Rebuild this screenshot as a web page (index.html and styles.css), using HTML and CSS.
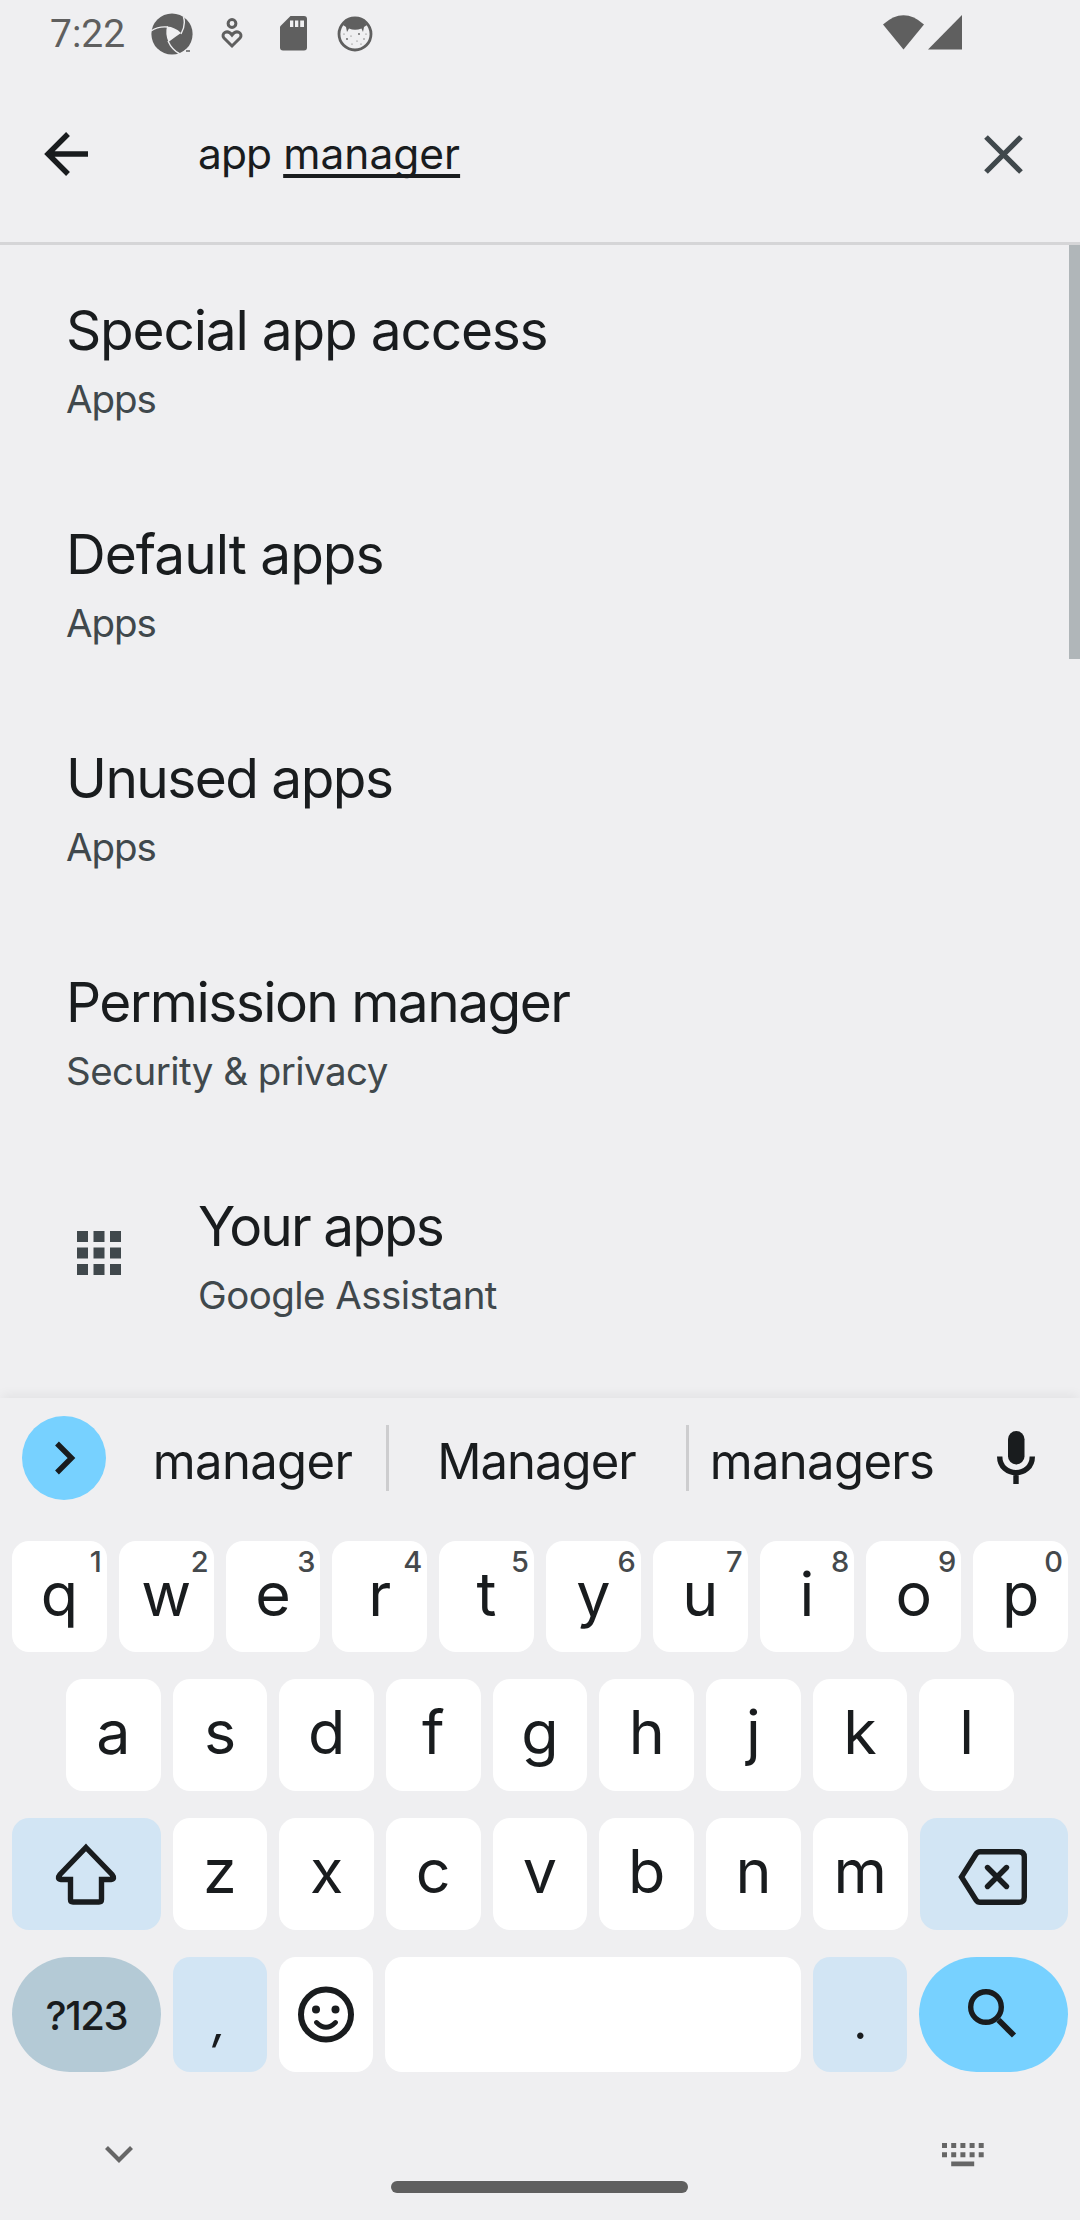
FILE: index.html
```html
<!DOCTYPE html>
<html lang="en">
<head>
<meta charset="utf-8">
<title>Settings search</title>
<link rel="stylesheet" href="styles.css">
</head>
<body>
<header class="status-bar">
  <span class="clock">7:22</span>
  <svg class="st-aperture" width="42" height="42" viewBox="0 0 42 42">
    <circle cx="21" cy="21" r="20.6" fill="#5f5f5f"/>
    <path d="M16 13.500 Q24 14 30 20 Q24 24 17.500 29 Q14 21 16 13.500Z" fill="#efeff1"/>
    <path d="M0 18 Q7 13 17 14 M32.500 4 Q35 12 30 21 M17 28 Q21 37 29 41" fill="none" stroke="#efeff1" stroke-width="1.400"/>
    <path d="M31 39.500 L36 36 L42 34 L42 42 L30 42Z" fill="#efeff1"/>
    <path d="M35 38h4" stroke="#5f5f5f" stroke-width="1.500"/>
  </svg>
  <svg class="st-heart" width="22" height="31" viewBox="0 0 22 31">
    <g fill="none" stroke="#5f5f5f" stroke-width="3"><circle cx="11" cy="5.500" r="3.900"/><path d="M11 28 L3 20 C-0.500 16 6 10.500 11 17 C16 10.500 22.500 16 19 20Z"/></g>
  </svg>
  <svg class="st-sd" width="28" height="35" viewBox="0 0 28 35">
    <path d="M10.500 0H24q3 0 3 3V31.500q0 3-3 3H3q-3 0-3-3V10.500Z" fill="#5f5f5f"/>
    <path d="M10 4.500h3.300v6.500H10zM15 4.500h3.300v6.500H15zM20.200 4.500h3.800v6.500h-3.800z" fill="#efeff1"/>
  </svg>
  <svg class="st-face" width="36" height="36" viewBox="0 0 36 36">
    <circle cx="18" cy="18" r="16" fill="none" stroke="#5f5f5f" stroke-width="2.800"/>
    <path d="M6 9Q18-5 30 9L27 11L26 16L24.500 12.500Q18 15 12 12.500L10 16L9 11Z" fill="#5f5f5f"/>
    <g fill="#5f5f5f"><circle cx="10" cy="23" r=".9"/><circle cx="22" cy="18" r=".9"/><circle cx="15" cy="28" r=".6"/><circle cx="27" cy="23" r=".7"/><circle cx="7" cy="18" r=".6"/><circle cx="20" cy="25" r=".6"/><circle cx="29" cy="18" r=".6"/><circle cx="14" cy="20" r=".6"/><circle cx="24" cy="28" r=".6"/></g>
  </svg>
  <svg class="st-wifi" width="41" height="35" viewBox="0 0 41 35"><path d="M0 9.500Q20.500-9 41 9.500L20.500 34.500Z" fill="#5f5f5f"/></svg>
  <svg class="st-signal" width="34" height="35" viewBox="0 0 34 35"><path d="M34 0V34.500H0Z" fill="#5f5f5f"/></svg>
</header>

<div class="search-bar">
  <svg class="back" width="44" height="44" viewBox="0 0 44 44"><path d="M24 2L4 22L24 42M4 22H44" fill="none" stroke="#191c1e" stroke-width="5.400"/></svg>
  <div class="query"><span class="typed">app</span> <span class="composing">manager</span></div>
  <svg class="clear" width="39" height="39" viewBox="0 0 39 39"><path d="M2 2L37 37M37 2L2 37" fill="none" stroke="#40484c" stroke-width="5.200"/></svg>
</div>

<main class="results">
  <div class="item special"><div class="copy"><div class="title">Special app access</div><div class="sub short">Apps</div></div></div>
  <div class="item default"><div class="copy"><div class="title">Default apps</div><div class="sub short">Apps</div></div></div>
  <div class="item unused"><div class="copy"><div class="title">Unused apps</div><div class="sub short">Apps</div></div></div>
  <div class="item permission"><div class="copy"><div class="title">Permission manager</div><div class="sub">Security &amp; privacy</div></div></div>
  <div class="item yours">
    <div class="icon"><svg width="45" height="44" viewBox="0 0 45 44"><path d="M0 0h11v11H0zM16.500 0h11v11h-11zM33 0h11v11H33zM0 16.500h11v11H0zM16.500 16.500h11v11h-11zM33 16.500h11v11H33zM0 33h11v11H0zM16.500 33h11v11h-11zM33 33h11v11H33z" fill="#40484c"/></svg></div>
    <div class="copy"><div class="title">Your apps</div><div class="sub">Google Assistant</div></div>
  </div>
  <div class="scrollbar"></div>
</main>

<section class="keyboard">
  <div class="suggestions">
    <div class="expand"><svg width="84" height="84" viewBox="0 0 84 84"><path d="M35 27.500L49.500 42L35 56.500" fill="none" stroke="#191c1e" stroke-width="5.400"/></svg></div>
    <div class="word word-a">manager</div>
    <div class="rule"></div>
    <div class="word word-b">Manager</div>
    <div class="rule"></div>
    <div class="word word-c">managers</div>
    <svg class="mic" width="38" height="53" viewBox="0 0 38 53"><rect x="11" y="0" width="16.500" height="33.500" rx="8.250" fill="#191c1e"/><path d="M2.700 25.500C2.700 47 35.300 47 35.300 25.500M19 42V53" fill="none" stroke="#191c1e" stroke-width="5.400"/></svg>
  </div>
  <div class="row">
    <div class="key">q<i>1</i></div><div class="key">w<i>2</i></div><div class="key">e<i>3</i></div><div class="key">r<i>4</i></div><div class="key">t<i>5</i></div><div class="key">y<i>6</i></div><div class="key">u<i>7</i></div><div class="key">i<i>8</i></div><div class="key">o<i>9</i></div><div class="key">p<i>0</i></div>
  </div>
  <div class="row row-home">
    <div class="key">a</div><div class="key">s</div><div class="key">d</div><div class="key">f</div><div class="key">g</div><div class="key">h</div><div class="key">j</div><div class="key">k</div><div class="key">l</div>
  </div>
  <div class="row">
    <div class="key wide tint"><svg width="62" height="62" viewBox="0 0 62 62"><path d="M31 4.500L57 31.500Q60.500 36 56 36.500H46.500V56.500Q46.500 59 44 59H18Q15.500 59 15.500 56.500V36.500H6Q1.500 36 5 31.500Z" fill="none" stroke="#191c1e" stroke-width="5.400"/></svg></div>
    <div class="key">z</div><div class="key">x</div><div class="key">c</div><div class="key">v</div><div class="key">b</div><div class="key">n</div><div class="key">m</div>
    <div class="key wide tint"><svg class="bksp" width="70" height="56" viewBox="0 0 70 56"><path d="M3.500 28L18 5Q19.500 2.700 22 2.700H61Q66.300 2.700 66.300 8V48Q66.300 53.300 61 53.300H22Q19.500 53.300 18 51Z" fill="none" stroke="#191c1e" stroke-width="5.400"/><path d="M29.500 18.500L48.500 37.500M48.500 18.500L29.500 37.500" stroke="#191c1e" stroke-width="5.400" stroke-linecap="round"/></svg></div>
  </div>
  <div class="row row-bottom">
    <div class="key wide symbols">?123</div>
    <div class="key tint punct comma">,</div>
    <div class="key"><svg class="emoji" width="56" height="57" viewBox="0 0 56 57"><circle cx="28" cy="28.500" r="25" fill="none" stroke="#191c1e" stroke-width="6"/><circle cx="18" cy="23.500" r="4" fill="#191c1e"/><circle cx="37.500" cy="23.500" r="4" fill="#191c1e"/><path d="M18.500 36.500Q28 46 37.500 36.500" fill="none" stroke="#191c1e" stroke-width="4.800" stroke-linecap="round"/></svg></div>
    <div class="key space"></div>
    <div class="key tint punct">.</div>
    <div class="key wide enter"><svg class="find" width="49" height="49" viewBox="0 0 49 49"><circle cx="18" cy="18" r="15.300" fill="none" stroke="#191c1e" stroke-width="5.400"/><path d="M30.500 31L46 46.500" stroke="#191c1e" stroke-width="5.800"/></svg></div>
  </div>
</section>

<footer class="nav">
  <svg class="hide" width="28" height="17" viewBox="0 0 28 17"><path d="M1.500 1.500L14 14L26.500 1.500" fill="none" stroke="#666" stroke-width="4.200"/></svg>
  <div class="home"></div>
  <svg class="switch" width="42" height="24" viewBox="0 0 42 24"><path d="M0 0h5v5H0zM9.200 0h5v5h-5zM18.400 0h5v5h-5zM27.600 0h5v5h-5zM36.700 0h5v5h-5zM0 9.200h5v5H0zM9.200 9.200h5v5h-5zM18.400 9.200h5v5h-5zM27.600 9.200h5v5h-5zM36.700 9.200h5v5h-5zM9.200 18.400h23v4.800h-23z" fill="#666"/></svg>
</footer>
</body>
</html>
```
FILE: styles.css
```css
* { box-sizing: border-box; }
body { margin: 0; width: 1080px; height: 2220px; overflow: hidden; background: #efeff1; color: #191c1e; font-family: Inter, "Liberation Sans", sans-serif; display: flex; flex-direction: column; }
svg { display: block; flex: none; }

.status-bar { height: 66px; display: flex; align-items: flex-start; padding-left: 50px; color: #5f5f5f; }
.clock { font-family: Roboto, sans-serif; font-size: 39px; line-height: 46px; margin-top: 11px; width: 101px; }
.st-aperture { margin-top: 13px; }
.st-heart { margin: 18px 0 0 28px; }
.st-sd { margin: 16px 0 0 37px; }
.st-face { margin: 16px 0 0 29px; }
.st-wifi { margin: 15px 0 0 auto; }
.st-signal { margin: 15px 118px 0 4px; }

.search-bar { height: 179px; border-bottom: 3px solid #d5d5d7; display: flex; align-items: center; padding: 0 57px 0 44px; }
.query { flex: 1; margin-left: 110px; font-size: 42.500px; line-height: 52px; white-space: nowrap; }
.typed { letter-spacing: -0.900px; }
.composing { text-decoration: underline; text-decoration-thickness: 4px; text-underline-offset: 5px; text-decoration-skip-ink: none; }

.results { position: relative; height: 1153px; overflow: hidden; }
.item { height: 224px; display: flex; padding: 50px 66px 0; }
.icon { width: 132px; padding: 40px 0 0 11px; }
.title { font-size: 55px; line-height: 70px; white-space: nowrap; }
.special .title { letter-spacing: -1.200px; }
.default .title { letter-spacing: -1px; }
.unused .title { letter-spacing: -1.550px; }
.permission .title { letter-spacing: -1.550px; }
.yours .title { letter-spacing: -1.900px; }
.sub { font-size: 38.500px; line-height: 50px; margin-top: 9px; color: #40484c; letter-spacing: -0.550px; white-space: nowrap; }
.sub.short { letter-spacing: -1.100px; }
.scrollbar { position: absolute; right: 0; top: 0; width: 11px; height: 414px; background: #b0b6b9; }

.keyboard { position: relative; background: #efeff1; box-shadow: 0 -6px 10px -2px rgba(0, 0, 0, .05); padding: 0 12px; }
.suggestions { height: 143px; display: flex; align-items: flex-start; padding: 18px 33px 0 10px; }
.expand { width: 84px; height: 84px; border-radius: 50%; background: #77d1ff; }
.word { font-size: 49px; line-height: 60px; margin-top: 16px; letter-spacing: -0.650px; text-align: center; white-space: nowrap; }
.word-a { width: 280px; padding-left: 13px; }
.word-b { width: 297px; letter-spacing: -1px; padding-right: 2px; }
.word-c { width: 266px; }
.rule { width: 3px; height: 66px; margin-top: 9px; background: #cdcdcf; }
.mic { margin: 15px 0 0 auto; }

.row { display: flex; gap: 12px; height: 111px; margin-bottom: 27px; }
.row + .row { height: 112px; }
.row-home { padding: 0 54px; }
.key { position: relative; flex: 1 1 0; border-radius: 17px; background: #fff; font-size: 61px; line-height: 106px; text-align: center; display: flex; justify-content: center; }
.key i { position: absolute; right: 5px; top: 3px; font-style: normal; font-size: 29px; line-height: 35px; font-weight: 500; color: #45494c; }
.wide { flex: none; width: 148.500px; }
.tint { background: #d2e5f4; }
.wide svg { margin-top: 25px; }
.wide .bksp { margin: 31px 0 0 -1px; }
.row + .row-bottom { height: 115px; margin-bottom: 0; }
.symbols { background: #b4cad6; border-radius: 58px; font-size: 40px; font-weight: 500; line-height: 118px; letter-spacing: -1.500px; }
.punct { font-size: 49px; line-height: 130px; }
.comma { font-style: italic; }
.emoji { margin-top: 29px; }
.space { flex: none; width: 416px; }
.enter { background: #77d1ff; border-radius: 58px; }
.wide .find { margin: 32px 0 0 -2px; }

.nav { flex: 1; display: flex; align-items: flex-start; padding: 74px 96px 0 105px; }
.home { width: 297px; height: 12px; margin: 35px 0 0 258px; border-radius: 6px; background: #5f5f5f; }
.switch { margin: -3px 0 0 auto; }
```
